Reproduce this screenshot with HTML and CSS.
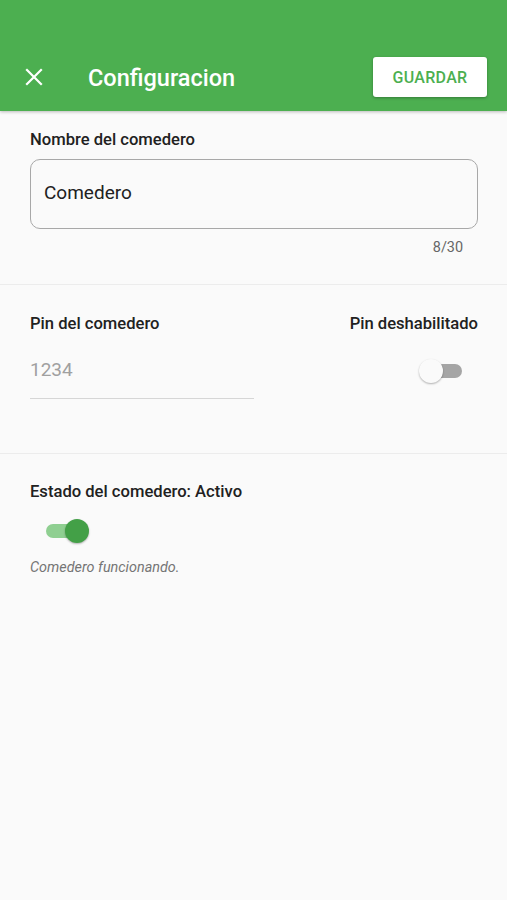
FILE: index.html
```html
<!DOCTYPE html>
<html lang="es">
<head>
<meta charset="utf-8">
<link rel="stylesheet" href="styles.css">
</head>
<body>
<header class="appbar">
  <button class="close" aria-label="Cerrar">
    <svg width="18" height="18" viewBox="0 0 18 18"><path d="M2 2L16 16M16 2L2 16" stroke="#fff" stroke-width="2.2" stroke-linecap="square"/></svg>
  </button>
  <h1 class="title">Configuracion</h1>
  <button class="save">GUARDAR</button>
</header>
<main>
  <section class="section name-section">
    <label class="label">Nombre del comedero</label>
    <div class="input-box">Comedero</div>
    <div class="counter">8/30</div>
  </section>
  <section class="section pin-section">
    <div class="pin-col">
      <label class="label">Pin del comedero</label>
      <div class="pin-input">1234</div>
    </div>
    <div class="pin-right">
      <label class="label">Pin deshabilitado</label>
      <div class="switch off"><span class="track"></span><span class="thumb"></span></div>
    </div>
  </section>
  <section class="section state-section">
    <label class="label">Estado del comedero: Activo</label>
    <div class="switch on"><span class="track"></span><span class="thumb"></span></div>
    <p class="hint">Comedero funcionando.</p>
  </section>
</main>
</body>
</html>
```
FILE: styles.css
```css
* { box-sizing: border-box; }
html, body { margin: 0; padding: 0; }
body {
  background: #fafafa;
  font-family: Roboto, "Noto Sans", sans-serif;
  color: #212121;
  width: 507px;
  min-height: 900px;
}
.appbar {
  background: #4caf50;
  height: 111px;
  display: flex;
  align-items: flex-end;
  padding: 0 20px 14px 25px;
  box-shadow: 0 1px 3px rgba(0,0,0,0.25);
}
.close {
  background: none;
  border: 0;
  padding: 0;
  width: 18px;
  height: 18px;
  margin-bottom: 11px;
  display: flex;
}
.title {
  margin: 0 0 0 45px;
  color: #fff;
  font-size: 23.5px;
  font-weight: 500;
  line-height: 26px;
  padding-bottom: 6px;
  flex: 1;
}
.save {
  background: #fff;
  border: 0;
  border-radius: 3px;
  width: 114px;
  height: 40px;
  color: #4caf50;
  font-family: Roboto, sans-serif;
  font-weight: 500;
  font-size: 16px;
  letter-spacing: 0.3px;
  box-shadow: 0 1px 3px rgba(0,0,0,0.3);
}
.section {
  padding: 0 29px 0 30px;
  border-bottom: 1px solid #ececec;
}
.label {
  display: block;
  font-size: 16.6px;
  font-weight: 500;
  line-height: 18px;
  color: #212121;
}
.name-section {
  padding-top: 20px;
  height: 174px;
}
.input-box {
  margin-top: 10px;
  height: 70px;
  border: 1.5px solid #a8a8a8;
  border-radius: 10px;
  padding: 0 13px 3px;
  display: flex;
  align-items: center;
  font-size: 19px;
  color: #212121;
}
.counter {
  text-align: right;
  font-size: 14.4px;
  color: #666;
  margin-top: 10px;
  padding-right: 15px;
}
.pin-section {
  display: flex;
  justify-content: space-between;
  padding-top: 30px;
  height: 169px;
}
.pin-col { width: 224px; }
.pin-input {
  margin-top: 24px;
  font-size: 19px;
  color: #a0a0a0;
  height: 42px;
  border-bottom: 1px solid #d6d6d6;
  padding-top: 1px;
}
.pin-right {
  display: flex;
  flex-direction: column;
  align-items: flex-end;
}
.switch {
  position: relative;
  width: 46px;
  height: 24px;
}
.switch .track {
  position: absolute;
  left: 3px;
  right: 3px;
  top: 5px;
  height: 14px;
  border-radius: 7px;
}
.switch .thumb {
  position: absolute;
  top: 0;
  width: 24px;
  height: 24px;
  border-radius: 50%;
  box-shadow: 0 1px 2px rgba(0,0,0,0.3);
}
.switch.off { margin-top: 26px; margin-right: 13px; }
.switch.off .track { background: #a5a5a5; }
.switch.off .thumb { left: 0; background: #fafafa; }
.switch.on { margin-top: 18px; margin-left: 13px; }
.switch.on .track { background: #8fcf91; }
.switch.on .thumb { right: 0; background: #43a047; }
.state-section {
  border-bottom: 0;
  padding-top: 29px;
}
.hint {
  margin: 16px 0 0;
  font-size: 14.4px;
  font-style: italic;
  color: #757575;
}
```
